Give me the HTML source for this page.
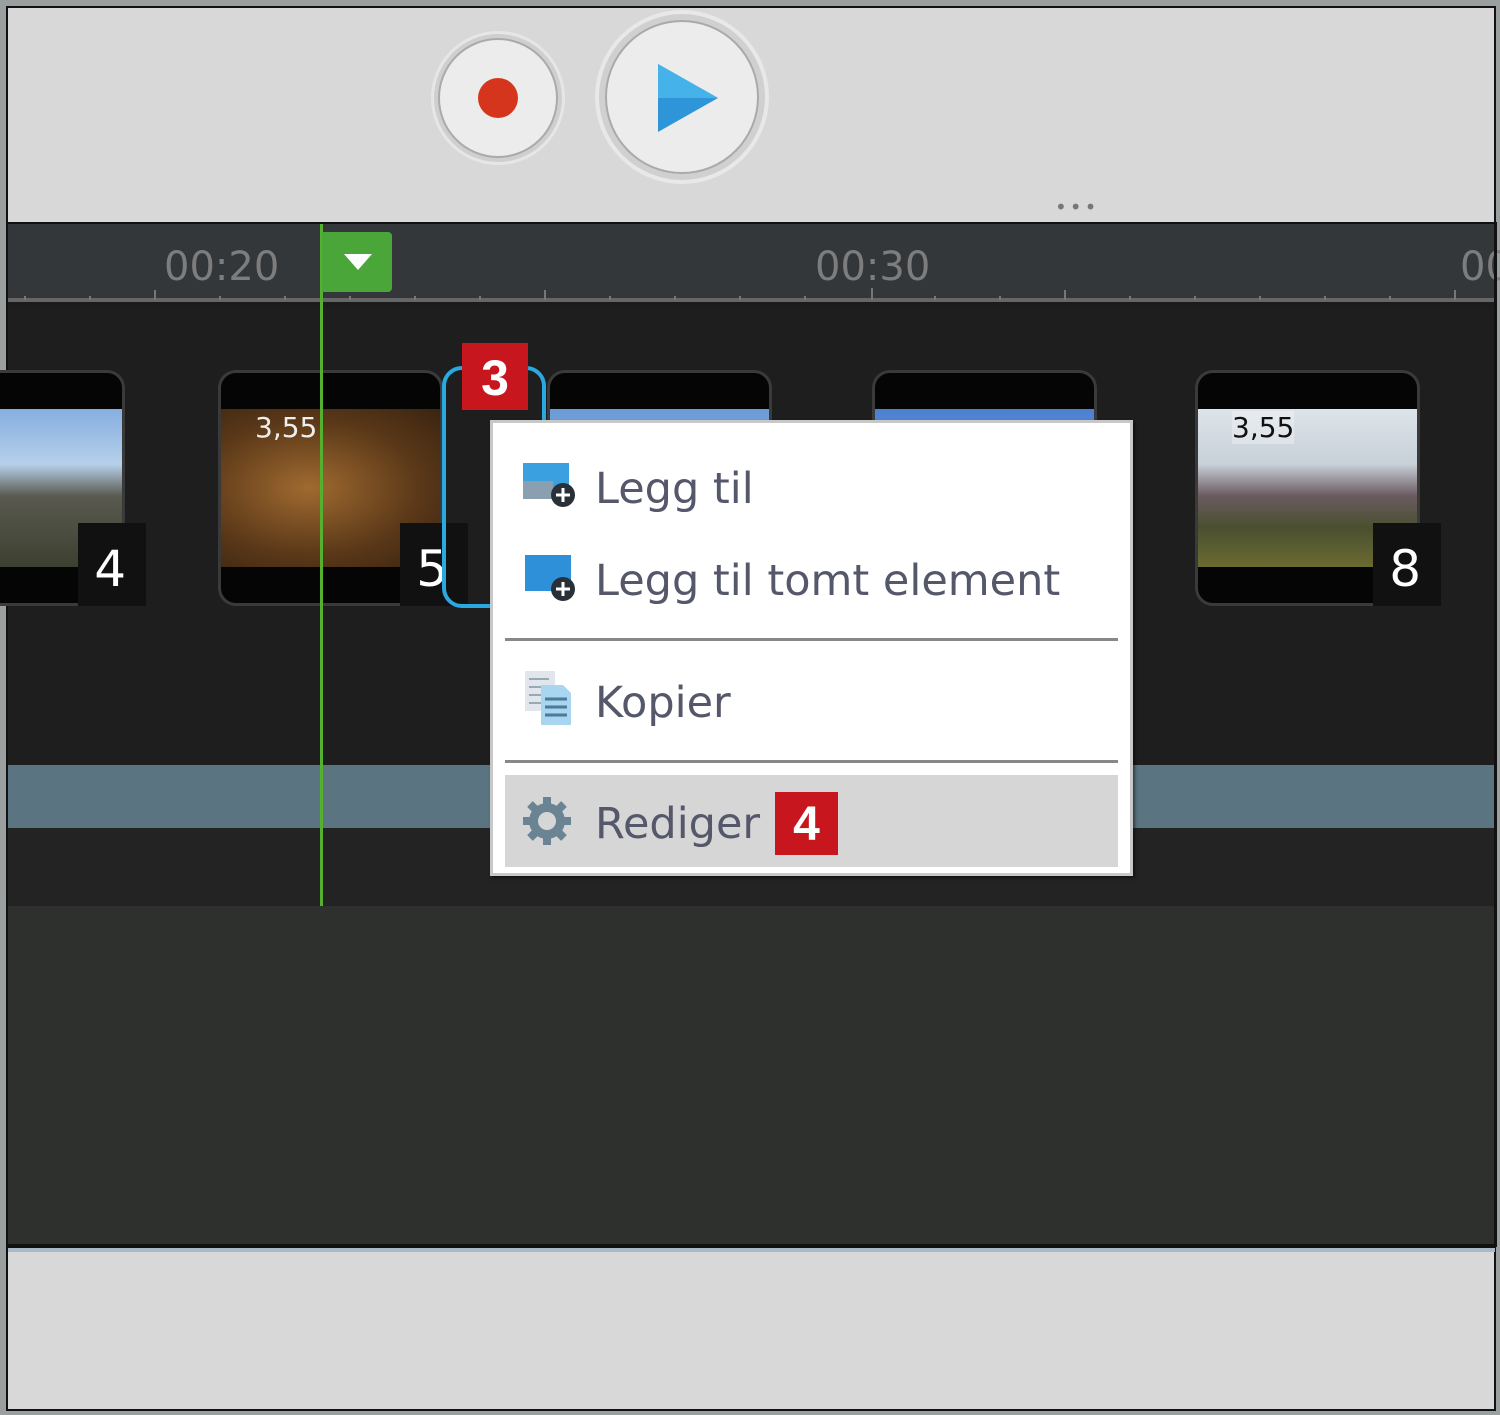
<!DOCTYPE html>
<html><head><meta charset="utf-8"><style>
*{margin:0;padding:0;box-sizing:border-box}
body{width:1500px;height:1415px;position:relative;overflow:hidden;background:#9aa0a0;font-family:"DejaVu Sans","Liberation Sans",sans-serif}
.a{position:absolute}
.clip{position:absolute;top:370px;width:225px;height:236px;border:3px solid #3a3a3a;border-radius:18px;background:#050505;overflow:hidden}
.thumb{position:absolute;left:0;right:0;top:36px;height:158px}
.num{position:absolute;top:523px;width:68px;height:83px;background:#111;color:#fff;font-size:50px;text-align:right;padding-right:20px;line-height:92px}
.item{position:absolute;left:0;right:0;height:92px;color:#55576a;font-size:43px;line-height:92px;padding-left:102px}
.badge{position:absolute;background:#c8161e;color:#fff;font-weight:bold;font-family:"Liberation Sans",sans-serif;text-align:center}
</style></head><body>
<div class="a" style="left:6px;top:6px;width:1490px;height:1405px;background:#d8d8d8;border:2px solid #111"></div>
<div class="a" style="left:438px;top:38px;width:120px;height:120px;border-radius:50%;background:#ececec;box-shadow:0 0 0 4px #cfcfcf,0 0 0 7px #e6e6e6;border:2px solid #aaa"></div>
<div class="a" style="left:478px;top:78px;width:40px;height:40px;border-radius:50%;background:#d4351c"></div>
<div class="a" style="left:605px;top:20px;width:154px;height:154px;border-radius:50%;background:#ececec;box-shadow:0 0 0 6px #d0d0d0,0 0 0 10px #e8e8e8;border:2px solid #aaa"></div>
<svg class="a" style="left:656px;top:62px" width="64" height="74"><polygon points="2,2 62,36 2,70" fill="#2e96d8"/><polygon points="2,2 62,36 2,36" fill="#45b2ea"/></svg>
<div class="a" style="left:1055px;top:202px;color:#777;font-size:20px;letter-spacing:3px;line-height:10px">•••</div>
<div class="a" style="left:8px;top:222px;width:1487px;height:86px;background:#343739;border-top:2px solid #111"></div>
<div class="a" style="left:8px;top:298px;width:1487px;height:4px;background:#666"></div>
<div class="a" style="left:8px;top:302px;width:1487px;height:6px;background:#1c1c1c"></div>
<svg class="a" style="left:0;top:288px" width="1500" height="12">
<g stroke="#777" stroke-width="2">
<line x1="25" y1="8" x2="25" y2="12"/><line x1="90" y1="8" x2="90" y2="12"/><line x1="155" y1="2" x2="155" y2="12"/><line x1="220" y1="8" x2="220" y2="12"/><line x1="285" y1="8" x2="285" y2="12"/><line x1="350" y1="8" x2="350" y2="12"/><line x1="415" y1="8" x2="415" y2="12"/><line x1="480" y1="8" x2="480" y2="12"/><line x1="545" y1="2" x2="545" y2="12"/><line x1="610" y1="8" x2="610" y2="12"/><line x1="675" y1="8" x2="675" y2="12"/><line x1="740" y1="8" x2="740" y2="12"/><line x1="805" y1="8" x2="805" y2="12"/><line x1="872" y1="0" x2="872" y2="12"/><line x1="935" y1="8" x2="935" y2="12"/><line x1="1000" y1="8" x2="1000" y2="12"/><line x1="1065" y1="2" x2="1065" y2="12"/><line x1="1130" y1="8" x2="1130" y2="12"/><line x1="1195" y1="8" x2="1195" y2="12"/><line x1="1260" y1="8" x2="1260" y2="12"/><line x1="1325" y1="8" x2="1325" y2="12"/><line x1="1390" y1="8" x2="1390" y2="12"/><line x1="1455" y1="2" x2="1455" y2="12"/></g></svg>
<div class="a" style="left:164px;top:244px;color:#7d7d7d;font-size:40px">00:20</div>
<div class="a" style="left:815px;top:244px;color:#7d7d7d;font-size:40px">00:30</div>
<div class="a" style="left:1460px;top:244px;color:#7d7d7d;font-size:40px">00</div>
<div class="a" style="left:8px;top:308px;width:1487px;height:457px;background:#1e1e1e"></div>
<div class="a" style="left:8px;top:765px;width:1487px;height:63px;background:#5a7482"></div>
<div class="a" style="left:8px;top:828px;width:1487px;height:78px;background:#232323"></div>
<div class="a" style="left:8px;top:906px;width:1487px;height:338px;background:#2e302e"></div>
<div class="a" style="left:6px;top:1244px;width:1490px;height:4px;background:#111"></div>
<div class="a" style="left:8px;top:1248px;width:1487px;height:4px;background:#a8b8c6"></div>
<div class="a" style="left:1494px;top:222px;width:3px;height:1025px;background:#111"></div>
<div class="clip" style="left:-100px"><div class="thumb" style="background:linear-gradient(180deg,#86aee0 0%,#b6d0ea 35%,#5a5a50 55%,#3c4030 100%)"></div></div>
<div class="num" style="left:78px">4</div>
<div class="clip" style="left:218px"><div class="thumb" style="background:radial-gradient(ellipse at 40% 50%,#a06a30,#5a3818 60%,#3a2410);"><span style="position:absolute;left:34px;top:2px;color:#eee;font-size:28px">3,55</span></div></div>
<div class="num" style="left:400px;width:68px">5</div>
<div class="clip" style="left:547px"><div class="thumb" style="background:linear-gradient(180deg,#6b9cd8,#a8c6e8)"></div></div>
<div class="clip" style="left:872px"><div class="thumb" style="background:linear-gradient(180deg,#4a80d0,#a8c6e8)"></div></div>
<div class="clip" style="left:1195px"><div class="thumb" style="background:linear-gradient(180deg,#dde4ea 0%,#c8d0d8 35%,#6a5a60 55%,#4a5030 75%,#6a6a30 100%)"><span style="position:absolute;left:34px;top:2px;color:#111;font-size:28px;background:rgba(255,255,255,.3)">3,55</span></div></div>
<div class="num" style="left:1373px">8</div>
<div class="a" style="left:442px;top:366px;width:104px;height:242px;border:4px solid #2aa8e0;border-radius:20px"></div>
<div class="a" style="left:320px;top:224px;width:3px;height:682px;background:#56b030"></div>
<div class="a" style="left:322px;top:232px;width:70px;height:60px;background:#4aa638;border-radius:0 4px 4px 0"></div>
<svg class="a" style="left:342px;top:252px" width="32" height="20"><polygon points="2,2 30,2 16,18" fill="#fff"/></svg>
<div class="badge" style="left:462px;top:343px;width:66px;height:67px;font-size:50px;line-height:70px">3</div>
<div class="a" style="left:490px;top:420px;width:643px;height:456px;background:#fff;border:3px solid #c8c8c8;box-shadow:2px 2px 3px rgba(0,0,0,.5)">
 <div class="item" style="top:20px">Legg til</div>
 <div class="item" style="top:112px">Legg til tomt element</div>
 <div class="a" style="left:12px;right:12px;top:215px;height:3px;background:#888"></div>
 <div class="item" style="top:234px">Kopier</div>
 <div class="a" style="left:12px;right:12px;top:337px;height:3px;background:#888"></div>
 <div class="a" style="left:12px;right:12px;top:352px;height:92px;background:#d6d6d6"></div>
 <div class="item" style="top:355px">Rediger</div>
 <svg class="a" style="left:28px;top:38px" width="56" height="50"><rect x="2" y="2" width="46" height="36" fill="#3aa0e0"/><rect x="2" y="20" width="30" height="18" fill="#8aa0b0"/><circle cx="42" cy="34" r="12" fill="#2a3038"/><path d="M42 27v14M35 34h14" stroke="#fff" stroke-width="3"/></svg>
 <svg class="a" style="left:28px;top:130px" width="56" height="50"><rect x="4" y="2" width="46" height="36" fill="#2e90d8"/><circle cx="42" cy="36" r="12" fill="#2a3038"/><path d="M42 29v14M35 36h14" stroke="#fff" stroke-width="3"/></svg>
 <svg class="a" style="left:28px;top:244px" width="56" height="64"><rect x="4" y="4" width="30" height="40" fill="#e0e6ec"/><path d="M8 12h20M8 20h20M8 28h20M8 36h20" stroke="#9aa8b4" stroke-width="2"/><path d="M20 18h22l8 8v32H20z" fill="#a8d6f0"/><path d="M24 32h22M24 40h22M24 48h22" stroke="#4c7a98" stroke-width="3"/></svg>
 <svg class="a" style="left:26px;top:370px" width="56" height="56" viewBox="0 0 56 56"><g fill="#6a8494"><circle cx="28" cy="28" r="18"/><g stroke="#6a8494" stroke-width="8"><path d="M28 4v48M4 28h48M11 11l34 34M45 11L11 45"/></g></g><circle cx="28" cy="28" r="9" fill="#d6d6d6"/></svg>
</div>
<div class="badge" style="left:775px;top:792px;width:63px;height:63px;font-size:48px;line-height:66px">4</div>
</body></html>
